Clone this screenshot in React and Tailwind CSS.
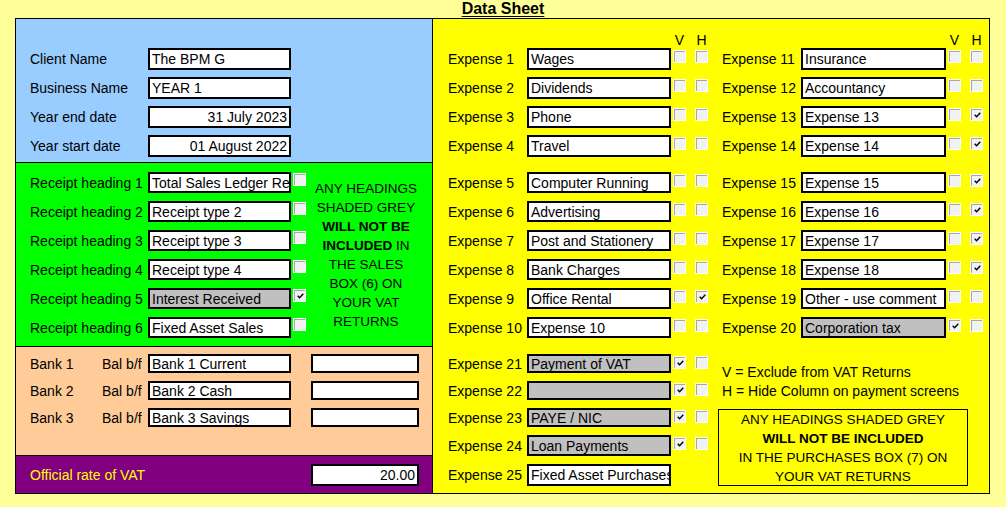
import React from "react";

// Data Sheet - client set-up page

function Check({ on }) {
  return (
    <div className="w-[13px] h-[13px] shrink-0 bg-white p-px">
      <div className="w-full h-full border-t border-l border-[#a8a8a8] bg-[#f2f2f2] flex items-center justify-center">
        {on && (
          <svg width="7" height="6" viewBox="0 0 7 6">
            <path d="M0.7 2.8 L2.6 4.8 L6.3 0.8" stroke="#000" strokeWidth="1.4" fill="none" />
          </svg>
        )}
      </div>
    </div>
  );
}

function Field({ value, size, gray, right }) {
  return (
    <div
      className={`${size} shrink-0 border-2 border-black flex items-center overflow-hidden whitespace-nowrap px-[2px] ${
        gray ? "bg-[#c0c0c0]" : "bg-white"
      } ${right ? "justify-end" : ""}`}
    >
      {value}
    </div>
  );
}

function ExpRow({ label, value, v, h, gray, size, boxes = true }) {
  return (
    <div className="flex">
      <div className="w-[79px] shrink-0 flex items-center">{label}</div>
      <Field value={value} size={size} gray={gray} />
      {boxes && (
        <>
          <div className="ml-[2px] mt-[2px]">
            <Check on={v} />
          </div>
          <div className="ml-[9px] mt-[2px]">
            <Check on={h} />
          </div>
        </>
      )}
    </div>
  );
}

function VH({ pad }) {
  return (
    <div className="flex h-[16px] leading-[16px]">
      <div className={pad} />
      <div className="w-[13px] text-center">V</div>
      <div className="ml-[9px] w-[13px] text-center">H</div>
    </div>
  );
}

const receipts = [
  ["Receipt heading 1", "Total Sales Ledger Receipts", false, false],
  ["Receipt heading 2", "Receipt type 2", false, false],
  ["Receipt heading 3", "Receipt type 3", false, false],
  ["Receipt heading 4", "Receipt type 4", false, false],
  ["Receipt heading 5", "Interest Received", true, true],
  ["Receipt heading 6", "Fixed Asset Sales", false, false],
];

const expA1 = [
  ["Expense 1", "Wages", false, false],
  ["Expense 2", "Dividends", false, false],
  ["Expense 3", "Phone", false, false],
  ["Expense 4", "Travel", false, false],
];
const expB1 = [
  ["Expense 11", "Insurance", false, false],
  ["Expense 12", "Accountancy", false, false],
  ["Expense 13", "Expense 13", false, true],
  ["Expense 14", "Expense 14", false, true],
];
const expA2 = [
  ["Expense 5", "Computer Running", false, false],
  ["Expense 6", "Advertising", false, false],
  ["Expense 7", "Post and Stationery", false, false],
  ["Expense 8", "Bank Charges", false, false],
  ["Expense 9", "Office Rental", false, true],
  ["Expense 10", "Expense 10", false, false],
];
const expB2 = [
  ["Expense 15", "Expense 15", false, true, false],
  ["Expense 16", "Expense 16", false, true, false],
  ["Expense 17", "Expense 17", false, true, false],
  ["Expense 18", "Expense 18", false, true, false],
  ["Expense 19", "Other - use comment", false, false, false],
  ["Expense 20", "Corporation tax", true, false, true],
];

export default function App() {
  return (
    <div className="w-[1006px] h-[507px] bg-[#ffff99] text-black text-[14px] leading-[16px] font-['Liberation_Sans',Arial,sans-serif] overflow-hidden">
      <div className="h-[18px] text-center text-[16px] leading-[18px] font-bold underline underline-offset-[2px]">
        Data Sheet
      </div>

      <div className="flex ml-[15px]">
        {/* left panel */}
        <div className="w-[418px] h-[476px] border border-black flex flex-col">
          <div className="h-[144px] shrink-0 bg-[#99ccff] border-b border-black pl-[14px] pt-[29px] flex flex-col gap-[7px]">
            {[
              ["Client Name", "The BPM G", false],
              ["Business Name", "YEAR 1", false],
              ["Year end date", "31 July 2023", true],
              ["Year start date", "01 August 2022", true],
            ].map(([l, v, r]) => (
              <div key={l} className="flex">
                <div className="w-[118px] flex items-center">{l}</div>
                <Field value={v} size="w-[143px] h-[22px]" right={r} />
              </div>
            ))}
          </div>

          <div className="h-[184px] shrink-0 bg-[#00ff00] border-b border-black flex">
            <div className="pl-[14px] pt-[9px] flex flex-col gap-[8px]">
              {receipts.map(([l, v, g, c]) => (
                <div key={l} className="flex">
                  <div className="w-[118px] flex items-center">{l}</div>
                  <Field value={v} size="w-[143px] h-[21px]" gray={g} />
                  <div className="ml-[2px] mt-px">
                    <Check on={c} />
                  </div>
                </div>
              ))}
            </div>
            <div className="w-[120px] pt-[16px] text-center text-[13.5px] leading-[19px]">
              ANY HEADINGS
              <br />
              SHADED GREY
              <br />
              <b>WILL NOT BE</b>
              <br />
              <b>INCLUDED</b> IN
              <br />
              THE SALES
              <br />
              BOX (6) ON
              <br />
              YOUR VAT
              <br />
              RETURNS
            </div>
          </div>

          <div className="h-[109px] shrink-0 bg-[#ffcc99] border-b border-black pl-[14px] pt-[7px] flex flex-col gap-[8px]">
            {["Bank 1 Current", "Bank 2 Cash", "Bank 3 Savings"].map((v, i) => (
              <div key={v} className="flex">
                <div className="w-[72px] flex items-center">Bank {i + 1}</div>
                <div className="w-[46px] flex items-center">Bal b/f</div>
                <Field value={v} size="w-[143px] h-[19px]" />
                <div className="ml-[20px]">
                  <Field value="" size="w-[108px] h-[19px]" />
                </div>
              </div>
            ))}
          </div>

          <div className="flex-1 bg-[#800080] pl-[14px] pt-[8px] flex">
            <div className="w-[281px] h-[22px] flex items-center text-[#ffff00]">Official rate of VAT</div>
            <Field value="20.00" size="w-[108px] h-[22px]" right />
          </div>
        </div>

        {/* right panel */}
        <div className="w-[557px] h-[476px] border-t border-r border-b border-black bg-[#ffff00] flex flex-col">
          <div className="h-[144px] shrink-0 pl-[15px] pt-[13px] flex">
            <div className="flex flex-col">
              <VH pad="w-[225px]" />
              <div className="flex flex-col gap-[7px]">
                {expA1.map(([l, v, a, b]) => (
                  <ExpRow key={l} label={l} value={v} v={a} h={b} size="w-[144px] h-[22px]" />
                ))}
              </div>
            </div>
            <div className="ml-[14px] flex flex-col">
              <VH pad="w-[226px]" />
              <div className="flex flex-col gap-[7px]">
                {expB1.map(([l, v, a, b]) => (
                  <ExpRow key={l} label={l} value={v} v={a} h={b} size="w-[145px] h-[22px]" />
                ))}
              </div>
            </div>
          </div>

          <div className="h-[184px] shrink-0 pl-[15px] pt-[9px] flex">
            <div className="flex flex-col gap-[8px]">
              {expA2.map(([l, v, a, b]) => (
                <ExpRow key={l} label={l} value={v} v={a} h={b} size="w-[144px] h-[21px]" />
              ))}
            </div>
            <div className="ml-[14px] flex flex-col gap-[8px]">
              {expB2.map(([l, v, a, b, g]) => (
                <ExpRow key={l} label={l} value={v} v={a} h={b} gray={g} size="w-[145px] h-[21px]" />
              ))}
            </div>
          </div>

          <div className="flex-1 pl-[15px] pt-[7px] flex">
            <div className="w-[260px] flex flex-col gap-[8px]">
              <ExpRow label="Expense 21" value="Payment of VAT" v gray size="w-[144px] h-[19px]" />
              <ExpRow label="Expense 22" value="" v gray size="w-[144px] h-[19px]" />
              <ExpRow label="Expense 23" value="PAYE / NIC" v gray size="w-[144px] h-[19px]" />
              <ExpRow label="Expense 24" value="Loan Payments" v gray size="w-[144px] h-[21px]" />
              <ExpRow label="Expense 25" value="Fixed Asset Purchases" boxes={false} size="w-[144px] h-[22px]" />
            </div>
            <div className="ml-[10px] pt-[9px] flex flex-col">
              <div className="pl-[4px] leading-[19px]">V = Exclude from VAT Returns</div>
              <div className="pl-[4px] leading-[19px]">H = Hide Column on payment screens</div>
              <div className="mt-[8px] w-[250px] h-[77px] border border-black text-center text-[13.5px] leading-[19px]">
                ANY HEADINGS SHADED GREY
                <br />
                <b>WILL NOT BE INCLUDED</b>
                <br />
                IN THE PURCHASES BOX (7) ON
                <br />
                YOUR VAT RETURNS
              </div>
            </div>
          </div>
        </div>
      </div>
    </div>
  );
}
